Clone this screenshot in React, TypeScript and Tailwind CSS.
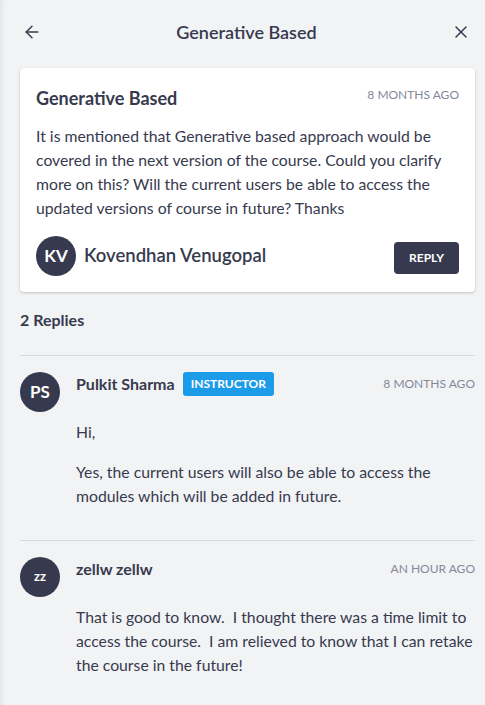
import { ArrowLeft, X } from "lucide-react"

const Avatar = ({ initials, small }: { initials: string; small?: boolean }) => (
  <div
    className={`flex h-10 w-10 shrink-0 items-center justify-center rounded-full bg-[#373a4e] font-bold text-white ${
      small ? "text-[13px]" : "text-[17px]"
    }`}
  >
    {initials}
  </div>
)

type Reply = {
  initials: string
  name: string
  instructor?: boolean
  time: string
  paragraphs: string[]
}

const replies: Reply[] = [
  {
    initials: "PS",
    name: "Pulkit Sharma",
    instructor: true,
    time: "8 MONTHS AGO",
    paragraphs: [
      "Hi,",
      "Yes, the current users will also be able to access the modules which will be added in future.",
    ],
  },
  {
    initials: "zz",
    name: "zellw zellw",
    time: "AN HOUR AGO",
    paragraphs: [
      "That is good to know.\u00a0 I thought there was a time limit to access the course.\u00a0 I am relieved to know that I can retake the course in the future!",
    ],
  },
]

export default function App() {
  return (
    <div className="h-screen overflow-hidden bg-[#f2f3f5] font-['Lato','Noto_Sans',sans-serif] text-[#373a4e] shadow-[inset_5px_0_6px_-5px_rgba(0,0,0,0.12)]">
      {/* header */}
      <div className="flex h-16 items-center justify-between pl-[22px] pr-[14px]">
        <ArrowLeft className="h-5 w-5" strokeWidth={1.75} />
        <h1 className="text-[18px] font-semibold">Generative Based</h1>
        <X className="h-5 w-5" strokeWidth={1.75} />
      </div>

      <div className="pl-5 pr-[10px]">
        {/* question card */}
        <div className="mt-1 rounded bg-white px-4 pb-4 pt-[18px] shadow-[0_1px_3px_rgba(0,0,0,0.2)]">
          <div className="flex items-start justify-between">
            <h2 className="text-[18px] font-bold leading-6">Generative Based</h2>
            <span className="text-[12px] text-[#85889a]">8 MONTHS AGO</span>
          </div>
          <p className="mt-[14px] text-[15.75px] leading-6">
            It is mentioned that Generative based approach would be covered in the next version of the course. Could you
            clarify more on this? Will the current users be able to access the updated versions of course in future?
            Thanks
          </p>
          <div className="mt-4 flex items-center justify-between">
            <div className="flex items-center gap-2">
              <Avatar initials="KV" />
              <span className="text-[18.5px] font-semibold">Kovendhan Venugopal</span>
            </div>
            <button className="mt-1 h-8 rounded bg-[#373a4e] px-[15px] text-[12px] font-bold text-white">REPLY</button>
          </div>
        </div>

        <div className="mt-4 text-[16px] font-bold">2 Replies</div>

        <div className="mt-[23px]">
          {replies.map((r) => (
            <div key={r.name} className="flex gap-4 border-t border-[#d8d9de] pb-8 pt-4">
              <Avatar initials={r.initials} small={r.initials === "zz"} />
              <div className="min-w-0 flex-1">
                <div className="flex h-6 items-center justify-between">
                  <div className="flex items-center gap-2">
                    <span className="text-[16px] font-bold">{r.name}</span>
                    {r.instructor && (
                      <span className="rounded-[3px] bg-[#1c9be8] px-2 py-[3px] text-[12px] font-bold text-white">
                        INSTRUCTOR
                      </span>
                    )}
                  </div>
                  <span className="text-[12px] text-[#85889a]">{r.time}</span>
                </div>
                <div className="mt-6 flex flex-col gap-4">
                  {r.paragraphs.map((p, i) => (
                    <p key={i} className="text-[15.75px] leading-6">
                      {p}
                    </p>
                  ))}
                </div>
              </div>
            </div>
          ))}
        </div>
      </div>
    </div>
  )
}
